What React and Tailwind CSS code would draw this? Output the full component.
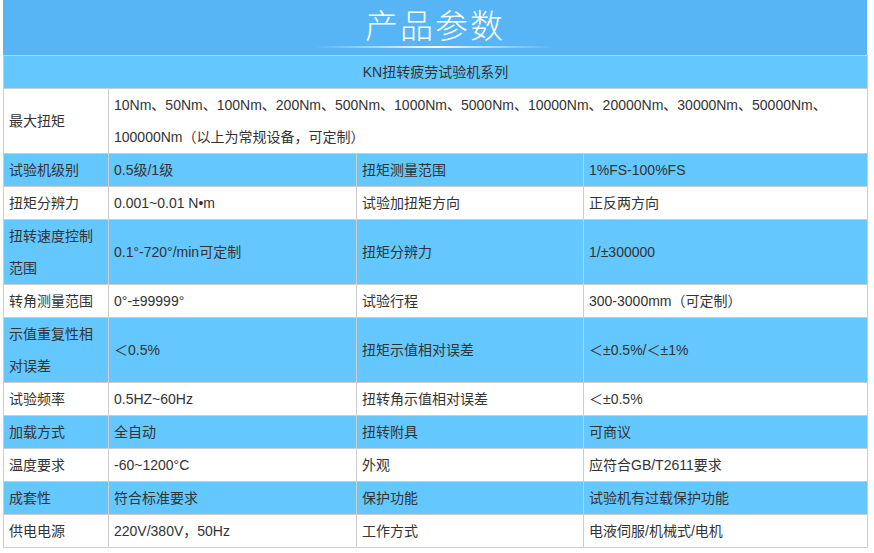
import React from "react";

const rows = [
  { blue: true, cells: ["试验机级别", "0.5级/1级", "扭矩测量范围", "1%FS-100%FS"] },
  { blue: false, cells: ["扭矩分辨力", "0.001~0.01 N•m", "试验加扭矩方向", "正反两方向"] },
  { blue: true, cells: [<>扭转速度控制<br />范围</>, "0.1°-720°/min可定制", "扭矩分辨力", "1/±300000"] },
  { blue: false, cells: ["转角测量范围", "0°-±99999°", "试验行程", "300-3000mm（可定制）"] },
  { blue: true, cells: [<>示值重复性相<br />对误差</>, "＜0.5%", "扭矩示值相对误差", "＜±0.5%/＜±1%"] },
  { blue: false, cells: ["试验频率", "0.5HZ~60Hz", "扭转角示值相对误差", "＜±0.5%"] },
  { blue: true, cells: ["加载方式", "全自动", "扭转附具", "可商议"] },
  { blue: false, cells: ["温度要求", "-60~1200°C", "外观", "应符合GB/T2611要求"] },
  { blue: true, cells: ["成套性", "符合标准要求", "保护功能", "试验机有过载保护功能"] },
  { blue: false, cells: ["供电电源", "220V/380V，50Hz", "工作方式", "电液伺服/机械式/电机"] },
];

export default function App() {
  const font = { fontFamily: '"Liberation Sans", Arial, "Noto Sans CJK SC", sans-serif' };
  const td = "border border-[#cdcdcd] px-[5px] py-0 align-middle text-left";
  return (
    <div className="w-[874px] h-[553px] bg-white overflow-hidden" style={font}>
      <div className="ml-[3px] w-[864px]">
        <div className="h-[55px] bg-[#57b5f6] flex flex-col items-center justify-start relative">
          <div className="text-white text-[33px] leading-[33px] tracking-[2px] mt-[8px] font-light" style={{ fontFamily: '"Noto Sans CJK SC", "Noto Sans", sans-serif' }}>
            产品参数
          </div>
          <div className="mt-[5px] h-[2px] w-[240px] bg-[linear-gradient(90deg,rgba(255,255,255,0)_0%,rgba(255,255,255,0.95)_50%,rgba(255,255,255,0)_100%)]" />
        </div>
        <table className="w-[864px] table-fixed border-collapse text-[14px] leading-[32px] text-[#333333]">
          <colgroup>
            <col className="w-[105px]" />
            <col className="w-[248px]" />
            <col className="w-[227px]" />
            <col className="w-[284px]" />
          </colgroup>
          <tbody>
            <tr className="bg-[#64c7fd]">
              <td colSpan={4} className="border border-[#cdcdcd] text-center py-0">
                KN扭转疲劳试验机系列
              </td>
            </tr>
            <tr className="bg-white">
              <td className={td}>最大扭矩</td>
              <td colSpan={3} className={td}>
                10Nm、50Nm、100Nm、200Nm、500Nm、1000Nm、5000Nm、10000Nm、20000Nm、30000Nm、50000Nm、
                <br />
                100000Nm（以上为常规设备，可定制）
              </td>
            </tr>
            {rows.map((r, i) => (
              <tr key={i} className={r.blue ? "bg-[#64c7fd]" : "bg-white"}>
                {r.cells.map((c, j) => (
                  <td key={j} className={td}>{c}</td>
                ))}
              </tr>
            ))}
          </tbody>
        </table>
      </div>
    </div>
  );
}
